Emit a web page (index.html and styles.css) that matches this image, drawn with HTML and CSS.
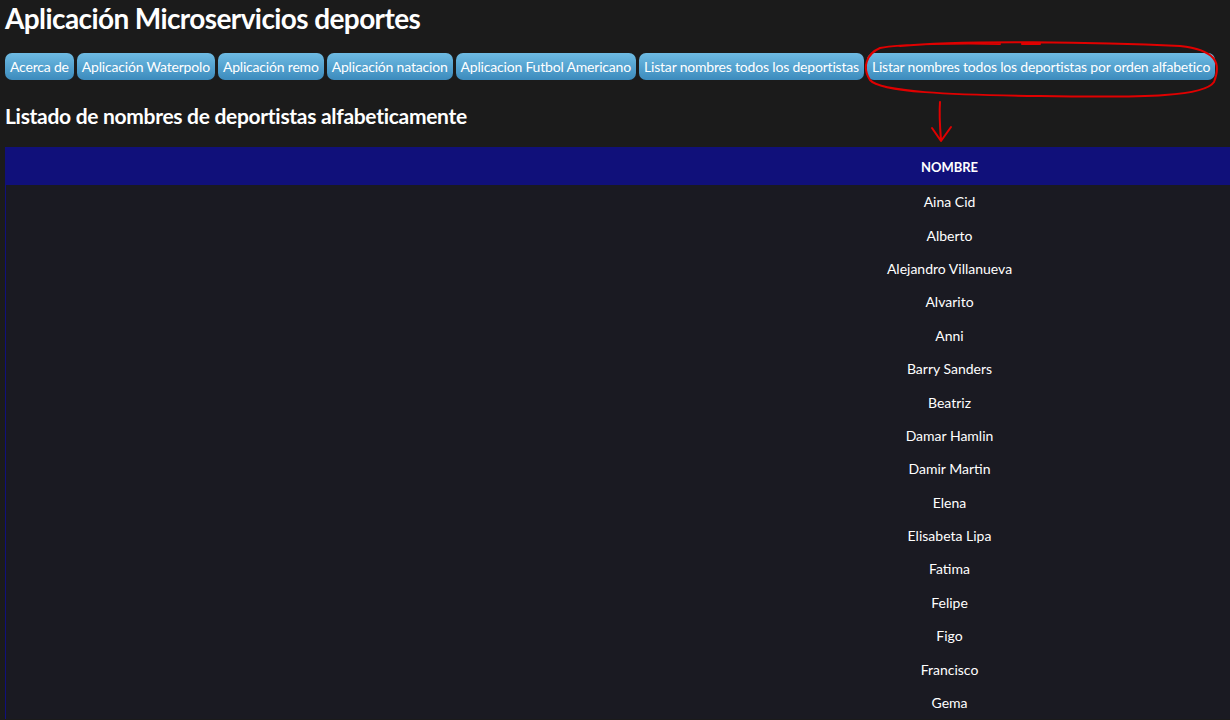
FILE: index.html
```html
<!DOCTYPE html>
<html lang="es">
<head>
<meta charset="utf-8">
<title>Aplicación Microservicios deportes</title>
<link rel="stylesheet" href="styles.css">
</head>
<body>
<h1 class="title">Aplicación Microservicios deportes</h1>
<nav class="menu">
  <button class="btn">Acerca de</button>
  <button class="btn">Aplicación Waterpolo</button>
  <button class="btn">Aplicación remo</button>
  <button class="btn">Aplicación natacion</button>
  <button class="btn">Aplicacion Futbol Americano</button>
  <button class="btn">Listar nombres todos los deportistas</button>
  <button class="btn">Listar nombres todos los deportistas por orden alfabetico</button>
</nav>
<h2 class="subtitle">Listado de nombres de deportistas alfabeticamente</h2>
<div class="table-wrap">
  <table class="names">
    <thead><tr><th>NOMBRE</th></tr></thead>
    <tbody>
      <tr><td>Aina Cid</td></tr>
      <tr><td>Alberto</td></tr>
      <tr><td>Alejandro Villanueva</td></tr>
      <tr><td>Alvarito</td></tr>
      <tr><td>Anni</td></tr>
      <tr><td>Barry Sanders</td></tr>
      <tr><td>Beatriz</td></tr>
      <tr><td>Damar Hamlin</td></tr>
      <tr><td>Damir Martin</td></tr>
      <tr><td>Elena</td></tr>
      <tr><td>Elisabeta Lipa</td></tr>
      <tr><td>Fatima</td></tr>
      <tr><td>Felipe</td></tr>
      <tr><td>Figo</td></tr>
      <tr><td>Francisco</td></tr>
      <tr><td>Gema</td></tr>
    </tbody>
  </table>
</div>
<svg class="annot" width="1230" height="150" viewBox="0 0 1230 150">
  <path d="M1022 44 L1040 44 M900 46 C960 40 1100 42 1180 46 C1215 50 1222 62 1214 82 C1205 96 1150 98 1040 96 C950 95 880 92 870 80 C862 68 866 54 880 48 C900 44 960 43 1000 44" fill="none" stroke="#e00000" stroke-width="2" stroke-linecap="round"/>
  <path d="M940 102 C939 115 940 128 941 140 M932 128 L941 141 L951 127" fill="none" stroke="#e00000" stroke-width="2" stroke-linecap="round" stroke-linejoin="round"/>
</svg>
</body>
</html>
```
FILE: styles.css
```css
html, body {
  margin: 0;
  padding: 0;
  background: #1b1b1b;
  overflow: hidden;
}
body {
  padding: 0 0 0 5px;
  font-family: Lato, "Noto Sans", sans-serif;
  color: #ffffff;
  position: relative;
  width: 1225px;
  height: 720px;
}
.title {
  margin: 0;
  padding-top: 1px;
  font-size: 28px;
  font-weight: 700;
  line-height: 34px;
  letter-spacing: -0.6px;
}
.menu {
  display: flex;
  gap: 3px;
  margin-top: 18px;
}
.btn {
  font-family: inherit;
  font-size: 14px;
  color: #ffffff;
  border: none;
  border-radius: 7px;
  padding: 0 5px;
  height: 27px;
  background: linear-gradient(#6ebbe3, #3c8bbd);
  letter-spacing: -0.19px;
  white-space: nowrap;
}
.subtitle {
  margin: 23px 0 0;
  font-size: 21px;
  font-weight: 700;
  line-height: 26px;
  letter-spacing: -0.3px;
}
.table-wrap {
  margin-top: 18px;
  width: 1225px;
  overflow: hidden;
}
.names {
  width: 1888px;
  border-collapse: collapse;
  border-left: 1px solid #10107a;
  border-top: 1px solid #10107a;
  background: #1a1a22;
}
.names th {
  background: #10107a;
  height: 37px;
  font-size: 13px;
  font-weight: 700;
  padding: 0;
}
.names td {
  height: 33.4px;
  font-size: 14px;
  text-align: center;
  padding: 0;
}
.annot {
  position: absolute;
  left: 0;
  top: 0;
  pointer-events: none;
}
```
